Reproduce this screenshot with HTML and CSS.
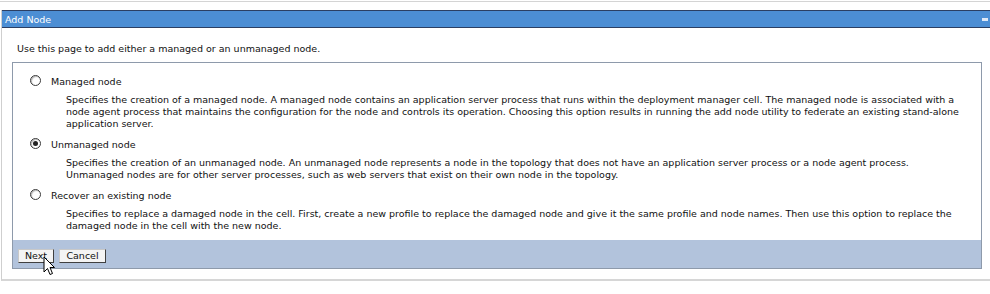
FILE: index.html
```html
<!DOCTYPE html>
<html lang="en">
<head>
    <meta charset="UTF-8">
    <title>Add Node</title>
    <link rel="stylesheet" href="styles.css">
</head>
<body>
    <div class="top-rule"></div>
    <div class="portlet">
        <div class="portlet-title">
            <span>Add Node</span>
            <span class="minimize"></span>
        </div>
        <div class="portlet-body">
            <p class="intro">Use this page to add either a managed or an unmanaged node.</p>
            <div class="wizard-box">
                <div class="options">
                    <label class="option">
                        <span class="radio"></span>
                        <span class="option-label">Managed node</span>
                    </label>
                    <p class="desc">Specifies the creation of a managed node. A managed node contains an application server process that runs within the deployment manager cell. The managed node is associated with a<br>node agent process that maintains the configuration for the node and controls its operation. Choosing this option results in running the add node utility to federate an existing stand-alone<br>application server.</p>

                    <label class="option">
                        <span class="radio checked"></span>
                        <span class="option-label">Unmanaged node</span>
                    </label>
                    <p class="desc">Specifies the creation of an unmanaged node. An unmanaged node represents a node in the topology that does not have an application server process or a node agent process.<br>Unmanaged nodes are for other server processes, such as web servers that exist on their own node in the topology.</p>

                    <label class="option">
                        <span class="radio"></span>
                        <span class="option-label">Recover an existing node</span>
                    </label>
                    <p class="desc">Specifies to replace a damaged node in the cell. First, create a new profile to replace the damaged node and give it the same profile and node names. Then use this option to replace the<br>damaged node in the cell with the new node.</p>
                </div>
                <div class="button-bar">
                    <button class="btn btn-next">Next</button>
                    <button class="btn btn-cancel">Cancel</button>
                    <svg class="cursor" width="13" height="20" viewBox="0 0 13 20">
                        <path d="M1 1 L1 16 L4.5 12.5 L7 18.5 L9.5 17.5 L7 11.5 L11.5 11.5 Z" fill="#fff" stroke="#000" stroke-width="1" stroke-linejoin="round"/>
                    </svg>
                </div>
            </div>
        </div>
    </div>
</body>
</html>
```

FILE: styles.css
```css
* {
    margin: 0;
    padding: 0;
    box-sizing: border-box;
}

body {
    font-family: 'DejaVu Sans', Verdana, sans-serif;
    font-size: 9.5px;
    color: #111;
    background: #fff;
}

.top-rule {
    height: 2px;
    border-bottom: 1px solid #d4d4d4;
}

.portlet {
    margin-top: 8px;
    margin-left: 1px;
    border-left: 1px solid #cfcfcf;
    border-bottom: 2px solid #d6d6d6;
}

.portlet-title {
    height: 18px;
    background: #4c8ed4;
    border-top: 1px solid #2b3f63;
    border-bottom: 1px solid #2b3f63;
    color: #fff;
    display: flex;
    align-items: center;
    justify-content: space-between;
    padding: 0 3px;
}

.minimize {
    width: 6px;
    height: 3px;
    background: #dfe9f7;
    margin-right: -1px;
}

.portlet-body {
    padding: 15px 8px 10px 10px;
}

.intro {
    line-height: 12px;
    padding-left: 5px;
    margin-bottom: 7px;
}

.wizard-box {
    border: 1px solid #8e9aab;
}

.options {
    padding: 13px 0 0 17px;
}

.option {
    display: flex;
    align-items: flex-start;
    gap: 10px;
    line-height: 12px;
    margin-bottom: 6px;
}

.radio {
    width: 11px;
    height: 11px;
    margin-top: -1px;
    border: 1px solid #3a3a3a;
    border-radius: 50%;
    background: #fff;
    display: flex;
    align-items: center;
    justify-content: center;
    box-shadow: inset 1px 1px 1px #bbb;
}

.radio.checked::after {
    content: '';
    width: 5px;
    height: 5px;
    border-radius: 50%;
    background: #222;
}

.desc {
    padding-left: 36px;
    line-height: 12px;
    margin-bottom: 9px;
}

.desc:last-child {
    margin-bottom: 8px;
}

.button-bar {
    background: #b2c3dc;
    height: 28px;
    padding: 9px 0 0 5px;
    display: flex;
    align-items: flex-start;
    gap: 5px;
    position: relative;
}

.btn {
    font-family: 'DejaVu Sans', Verdana, sans-serif;
    font-size: 9.5px;
    height: 14px;
    line-height: 12px;
    background: #f4f4f4;
    border: 1px solid #c8c8c8;
    border-right-color: #404040;
    border-bottom-color: #404040;
    color: #111;
}

.btn-next {
    width: 36px;
}

.btn-cancel {
    width: 47px;
}

.cursor {
    position: absolute;
    left: 30px;
    top: 16px;
}
```
